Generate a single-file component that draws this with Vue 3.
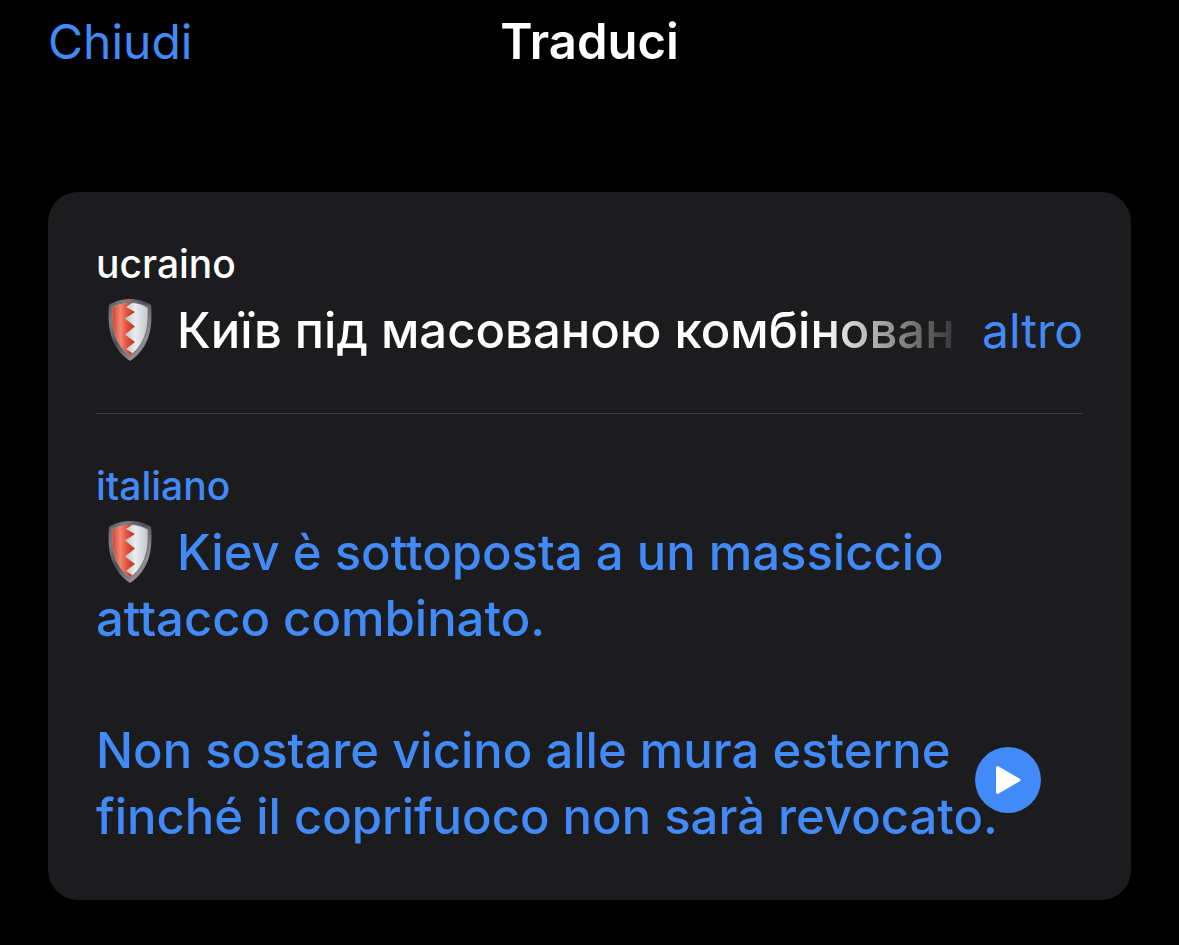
<template>
  <main class="sheet">
    <svg class="defs" aria-hidden="true">
      <defs>
        <linearGradient id="rim" x1="0" y1="0" x2="1" y2="1">
          <stop offset="0" stop-color="#54565a" />
          <stop offset="0.2" stop-color="#7c7e81" />
          <stop offset="0.45" stop-color="#4c4e51" />
          <stop offset="0.75" stop-color="#8f9193" />
          <stop offset="1" stop-color="#4d4f52" />
        </linearGradient>
        <linearGradient id="red" x1="0" y1="0" x2="1" y2="0">
          <stop offset="0" stop-color="#d2432f" />
          <stop offset="0.35" stop-color="#f58672" />
          <stop offset="0.65" stop-color="#e2513d" />
          <stop offset="1" stop-color="#b93222" />
        </linearGradient>
        <linearGradient id="silver" x1="0" y1="0" x2="1" y2="0">
          <stop offset="0.3" stop-color="#b9bec3" />
          <stop offset="0.65" stop-color="#e9edf0" />
          <stop offset="1" stop-color="#c3c8cd" />
        </linearGradient>
        <symbol id="shield" viewBox="0 0 44 62">
          <path d="M22 0C15 0 7 2 1 6C-1 30 3 49 22 62C41 49 45 30 43 6C37 2 29 0 22 0Z" fill="url(#rim)" />
          <path d="M22 3C15 3 8.500 5 3.500 8C2.500 30 6.500 46 22 58C37.500 46 41.500 30 40.500 8C35.500 5 29 3 22 3Z" fill="#77797c" />
          <path d="M22 4C15 4 9 5.500 4.500 9C3.500 30 7.500 45 22 56.500C36.500 45 40.500 30 39.500 9C35 5.500 29 4 22 4Z" fill="url(#silver)" />
          <path d="M21 4C15 4 9 5.500 4.500 9C3.500 30 7.500 45 22 56.500L24.500 54L18 50L27 43L17 35.500L27 27.500L17 19.500L27 13L18 8L24 4Z" fill="url(#red)" />
        </symbol>
      </defs>
    </svg>

    <header class="topbar">
      <button type="button" class="link-btn close">Chiudi</button>
      <h1 class="title">Traduci</h1>
    </header>

    <section class="card">
      <article class="block" lang="uk">
        <h2 class="lang-name" lang="it">ucraino</h2>
        <div class="source-row">
          <p class="text source" :class="{ faded: !expanded }">
            <svg class="shield" role="img" aria-label="scudo"><use href="#shield" /></svg>
            {{ source }}
          </p>
          <button v-if="!expanded" type="button" class="link-btn" lang="it" @click="expanded = true">altro</button>
        </div>
      </article>

      <hr class="divider">

      <article class="block translated" lang="it">
        <h2 class="lang-name">italiano</h2>
        <p class="text">
          <svg class="shield" role="img" aria-label="scudo"><use href="#shield" /></svg>
          {{ translation[0] }}
        </p>
        <p class="text next">{{ translation[1] }}</p>
      </article>

      <button type="button" class="play" aria-label="Riproduci">
        <svg viewBox="0 0 66 66"><path d="M22.500 20.500L44 33L22.500 45.500Z" fill="#fff" stroke="#fff" stroke-width="3" stroke-linejoin="round" /></svg>
      </button>
    </section>
  </main>
</template>

<script setup>
import { ref } from 'vue'

const expanded = ref(false)

const source = 'Київ під масованою комбінован'
const translation = [
  'Kiev è sottoposta a un massiccio attacco combinato.',
  'Non sostare vicino alle mura esterne finché il coprifuoco non sarà revocato.',
]
</script>

<style>
body { margin: 0; background: #000; }
</style>

<style scoped>
.sheet {
  padding: 9px 48px 45px;
  color: #fff;
  font-family: Inter, 'Liberation Sans', sans-serif;
  font-size: 49px;
  line-height: 66px;
}

.defs { position: absolute; width: 0; height: 0; }

.topbar {
  display: grid;
  grid-template-columns: 1fr auto 1fr;
  align-items: center;
  margin-bottom: 117px;
}

.title { margin: 0; font-size: 49px; font-weight: 600; }

.link-btn {
  padding: 0;
  border: 0;
  background: none;
  color: #428af8;
  font: inherit;
  font-size: 48px;
  cursor: pointer;
}
.close { justify-self: start; }

.card {
  position: relative;
  padding: 48px;
  border-radius: 30px;
  background: #1c1c1e;
}

.lang-name {
  margin: 0 0 10px;
  font-size: 39px;
  font-weight: 500;
  line-height: 48px;
}

.text { margin: 0; font-weight: 500; }
.next { margin-top: 66px; }
.translated { padding-bottom: 2px; color: #428af8; }

.source-row { display: flex; align-items: flex-end; gap: 28px; }
.source { flex: 1; min-width: 0; }
.faded {
  white-space: nowrap;
  mask-image: linear-gradient(to right, #000 calc(100% - 132px), rgba(0, 0, 0, 0.12));
}

.shield {
  width: 44px;
  height: 62px;
  margin: 0 12px 0 12px;
  vertical-align: -13px;
}

.divider {
  height: 1px;
  margin: 49px 0 48px;
  border: 0;
  background: #3d3d40;
}

.play {
  position: absolute;
  right: 90px;
  bottom: 87px;
  width: 66px;
  height: 66px;
  padding: 0;
  border: 0;
  border-radius: 50%;
  background: #428af8;
  cursor: pointer;
}
.play svg { display: block; width: 100%; height: 100%; }
</style>
